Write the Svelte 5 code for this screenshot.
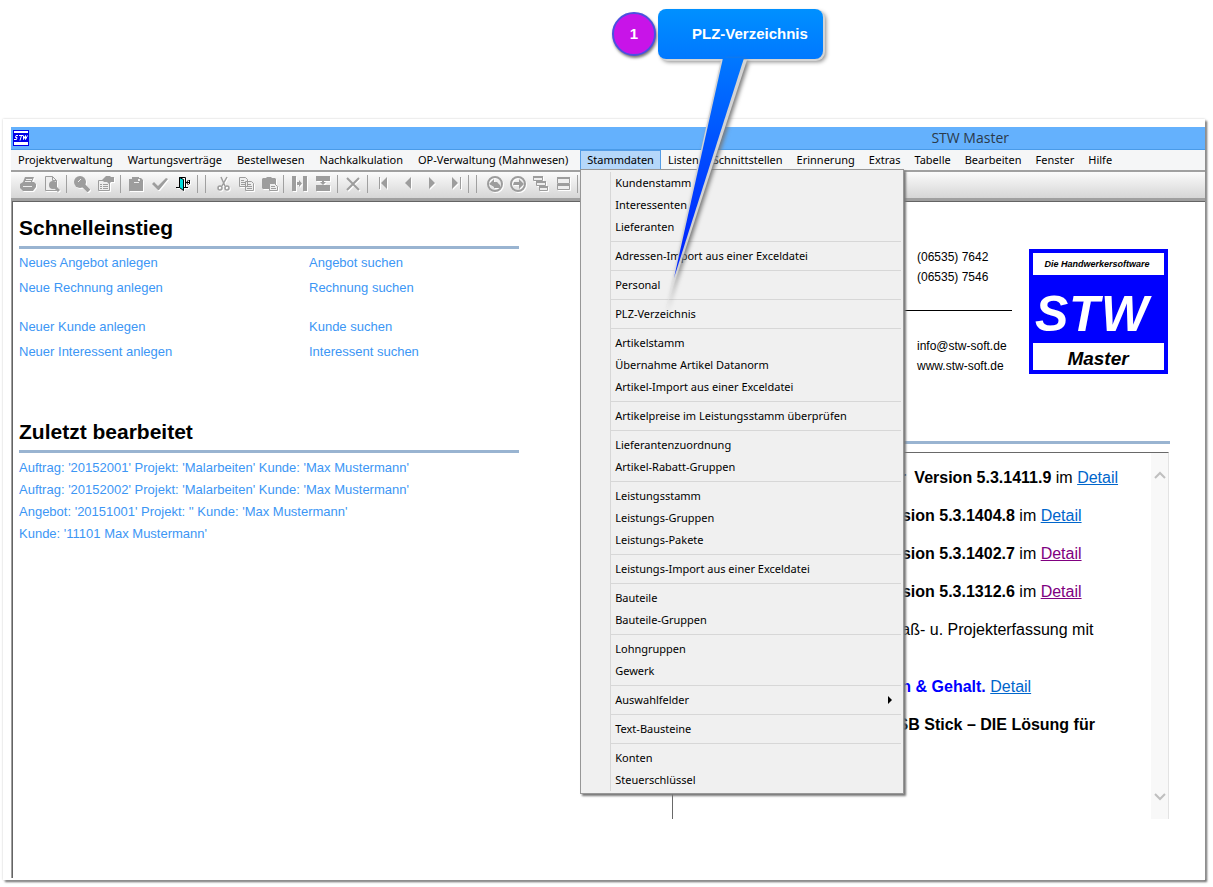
<script>
  const menusBefore = ['Projektverwaltung', 'Wartungsverträge', 'Bestellwesen', 'Nachkalkulation', 'OP-Verwaltung (Mahnwesen)'];
  const menusAfter = ['Listen', 'Schnittstellen', 'Erinnerung', 'Extras', 'Tabelle', 'Bearbeiten', 'Fenster', 'Hilfe'];

  const menuGroups = [
    ['Kundenstamm', 'Interessenten', 'Lieferanten'],
    ['Adressen-Import aus einer Exceldatei'],
    ['Personal'],
    ['PLZ-Verzeichnis'],
    ['Artikelstamm', 'Übernahme Artikel Datanorm', 'Artikel-Import aus einer Exceldatei'],
    ['Artikelpreise im Leistungsstamm überprüfen'],
    ['Lieferantenzuordnung', 'Artikel-Rabatt-Gruppen'],
    ['Leistungsstamm', 'Leistungs-Gruppen', 'Leistungs-Pakete'],
    ['Leistungs-Import aus einer Exceldatei'],
    ['Bauteile', 'Bauteile-Gruppen'],
    ['Lohngruppen', 'Gewerk'],
    ['Auswahlfelder'],
    ['Text-Bausteine'],
    ['Konten', 'Steuerschlüssel']
  ];
  const submenus = ['Auswahlfelder'];

  const toolGroups = [
    { tools: ['print', 'preview'] },
    { tools: ['find', 'properties'] },
    { tools: ['save', 'check', 'exit'], double: true },
    { tools: ['cut', 'copy', 'paste'], tight: true },
    { tools: ['insert', 'append'] },
    { tools: ['delete'] },
    { tools: ['first', 'prev', 'next', 'last'], double: true },
    { tools: ['back', 'forward', 'cascade', 'tile'], tight: true }
  ];

  const quickLinks = [
    [['Neues Angebot anlegen', 'Angebot suchen'], ['Neue Rechnung anlegen', 'Rechnung suchen']],
    [['Neuer Kunde anlegen', 'Kunde suchen'], ['Neuer Interessent anlegen', 'Interessent suchen']]
  ];

  const recent = [
    "Auftrag: '20152001' Projekt: 'Malarbeiten' Kunde: 'Max Mustermann'",
    "Auftrag: '20152002' Projekt: 'Malarbeiten' Kunde: 'Max Mustermann'",
    "Angebot: '20151001' Projekt: '' Kunde: 'Max Mustermann'",
    "Kunde: '11101 Max Mustermann'"
  ];

  const news = [
    { lead: 'der', indent: 208, bold: 'Version 5.3.1411.9', plain: 'im', link: true },
    { indent: 204, bold: 'Version 5.3.1404.8', plain: 'im', link: true },
    { indent: 204, bold: 'Version 5.3.1402.7', plain: 'im', link: true, visited: true },
    { indent: 204, bold: 'Version 5.3.1312.6', plain: 'im', link: true, visited: true },
    { indent: 191, plain: 'Aufmaß- u. Projekterfassung mit', wide: true },
    { indent: 199, bold: 'Lohn & Gehalt.', blue: true, link: true },
    { indent: 213, bold: 'USB Stick – DIE Lösung für' }
  ];
</script>

{#snippet icon(name)}
  <svg class="icon" viewBox="0 0 16 16" width="16" height="16" aria-hidden="true">
    {#if name === 'print'}
      <path d="M5 1h9l-2 5h2l2 2v3l-3 4H3l-3-3V8l3-2z" />
      <path d="M6 3.500h6M5 5.500h6M3 10.500h9" stroke="#eee" />
    {:else if name === 'preview'}
      <path d="M1.500.5h7l4 4v10h-11z" fill="#eee" stroke="#9d9d9d" />
      <path d="M8.500.5v4h4" fill="none" stroke="#9d9d9d" />
      <circle cx="9" cy="9" r="4" />
      <path d="M11 11l4 4" stroke="#9d9d9d" stroke-width="3" />
    {:else if name === 'find'}
      <circle cx="6" cy="6" r="6" />
      <path d="M4 6l3-3" stroke="#eee" />
      <path d="M9 9l6 6" stroke="#9d9d9d" stroke-width="4" />
    {:else if name === 'properties'}
      <path d="M.5 4.500h11v10H.5z" fill="#eee" stroke="#9d9d9d" />
      <path d="M2 8.500h2M5 8.500h5M2 10.500h2M5 10.500h5M2 12.500h2M5 12.500h5" stroke="#9d9d9d" />
      <path d="M4 4l4-4h4l1 1h3v5h-3l-2 2-2-2H6z" />
    {:else if name === 'save'}
      <path d="M1 3h3V1h7v1h2l2 2v11H1z" />
      <path d="M6 6.500h5M2 2.500h2" stroke="#eee" />
      <path d="M10 3h2v2h-2z" fill="#eee" />
    {:else if name === 'check'}
      <path d="M0 8l2-2 4 4 8-8 2 1-9 11H6z" />
    {:else if name === 'exit'}
      <path d="M0 11.500h3M3.500 12V1.500h6v10M7 11.500h5" fill="none" stroke="#000" />
      <path d="M3.500 1.500l4 2v11l-4-3z" fill="#0dd" stroke="#000" />
      <path d="M9 6.500h5M12.500 4l-2 2.500 2 2.500M13.500 4v4" fill="none" stroke="#000" />
    {:else if name === 'cut'}
      <path d="M5 1l4 9M11 1L6 10" fill="none" stroke="#9d9d9d" stroke-width="1.5" />
      <circle cx="4" cy="12" r="2" fill="none" stroke="#9d9d9d" stroke-width="1.5" />
      <circle cx="11" cy="12" r="2" fill="none" stroke="#9d9d9d" stroke-width="1.5" />
    {:else if name === 'copy'}
      <path d="M.5 1.500h6l2 2v7h-8zM6.500 5.500h6l2 2v7h-8z" fill="#eee" stroke="#9d9d9d" />
      <path d="M2 4.500h3M2 6.500h4M2 8.500h4M8 8.500h4M8 10.500h5M8 12.500h5" stroke="#9d9d9d" />
    {:else if name === 'paste'}
      <path d="M0 3l1-1h3l1-1h4l1 1h3l1 1v10H1l-1-1z" />
      <path d="M7.500 7.500h5l3 3v4h-8z" fill="#eee" stroke="#9d9d9d" />
      <path d="M9 10.500h4M9 12.500h5" stroke="#9d9d9d" />
    {:else if name === 'insert'}
      <path d="M1 0h4v15H1zM12 0h4v15h-4zM6 6h2V4l3 3.500L8 11V9H6z" />
    {:else if name === 'append'}
      <path d="M1 0h14v5H9v1h2L8 9 5 6h2V5H1zM1 9h14v6H1z" />
    {:else if name === 'delete'}
      <path d="M2 2l12 12M14 2L2 14" fill="none" stroke="#9d9d9d" stroke-width="2" />
    {:else if name === 'first'}
      <path d="M4 1h1v12H4zM12 1v12L6 7z" />
    {:else if name === 'prev'}
      <path d="M12 1v12L6 7z" />
    {:else if name === 'next'}
      <path d="M6 1v12l6-6z" />
    {:else if name === 'last'}
      <path d="M5 1v12l6-6zM13 1h1v12h-1z" />
    {:else if name === 'back'}
      <circle cx="8" cy="8" r="7" fill="none" stroke="#9d9d9d" stroke-width="2" />
      <path d="M2 8l5-5v3h3l3 3v3H7v-1z" />
    {:else if name === 'forward'}
      <circle cx="8" cy="8" r="7" fill="none" stroke="#9d9d9d" stroke-width="2" />
      <path d="M14 8L9 3v3H4L3 9h6v4z" />
    {:else if name === 'cascade'}
      <path d="M.5.5h9v4h-9zM3.500 5.500h9v4h-9zM6.500 10.500h8v4h-8z" fill="#eee" stroke="#9d9d9d" />
      <path d="M0 0h10v2H0zM3 5h10v2H3zM6 10h9v2H6z" />
    {:else if name === 'tile'}
      <path d="M1.500 1.500h12v6h-12zM1.500 8.500h12v5h-12z" fill="#eee" stroke="#9d9d9d" />
      <path d="M1 1h13v2H1zM1 8h13v2H1z" />
    {/if}
  </svg>
{/snippet}

<div class="page">
  <div class="window">
    <header class="titlebar">
      <svg class="app-icon" viewBox="0 0 16 16" width="16" height="16" aria-hidden="true">
        <path d="M0 0h16v16H0z" fill="#0000e8" />
        <path d="M1 1h14v2H1zM1 12h14v3H1z" fill="#fff" />
        <path d="M5 5.500H3L2.500 7.500H4l-.5 2H1M6 5.500h4M8.500 5.500L7 10.500M10.500 5.500v4l2-4v4l2-4" fill="none" stroke="#fff" />
      </svg>
      <span class="title">STW Master</span>
    </header>

    <nav class="menubar">
      <div class="modules">
        {#each menusBefore as name}
          <button class="menu">{name}</button>
        {/each}
      </div>
      <div class="menu-open">
        <button class="menu active" aria-expanded="true">Stammdaten</button>
        <div class="dropdown">
          {#each menuGroups as group}
            <div class="menu-group">
              {#each group as item}
                <button class="entry">
                  {item}
                  {#if submenus.includes(item)}
                    <svg class="arrow" viewBox="0 0 4 8" width="4" height="8" aria-hidden="true"><path d="M0 0l4 4-4 4z" /></svg>
                  {/if}
                </button>
              {/each}
            </div>
          {/each}
        </div>
      </div>
      {#each menusAfter as name}
        <button class="menu">{name}</button>
      {/each}
    </nav>

    <div class="toolbar">
      {#each toolGroups as group}
        <div class="tool-group" class:tight={group.tight}>
          {#each group.tools as tool}
            <button class="tool" aria-label={tool}>{@render icon(tool)}</button>
          {/each}
        </div>
        <span class="divider" class:double={group.double}></span>
      {/each}
    </div>

    <main class="content">
      <div class="start">
        <section class="quick">
          <h2>Schnelleinstieg</h2>
          {#each quickLinks as block}
            <div class="link-block">
              {#each block as [create, search]}
                <a href="#neu">{create}</a>
                <a href="#suchen">{search}</a>
              {/each}
            </div>
          {/each}
        </section>
        <section class="recent">
          <h2>Zuletzt bearbeitet</h2>
          <div class="recent-list">
            {#each recent as entry}
              <a href="#zuletzt">{entry}</a>
            {/each}
          </div>
        </section>
      </div>

      <aside class="info">
        <div class="company">
          <div class="contact">
            <p>(06535) 7642<br />(06535) 7546</p>
            <p class="web">info@stw-soft.de<br />www.stw-soft.de</p>
          </div>
          <svg class="logo" viewBox="0 0 139 125" width="139" height="125" role="img" aria-label="STW Master">
            <path d="M0 0h139v125H0z" fill="#00f" />
            <path d="M4 4h131v22H4zM4 94h131v27H4z" fill="#fff" />
            <text x="68" y="18" text-anchor="middle" font-size="9">Die Handwerkersoftware</text>
            <g class="brand" font-size="50">
              <text x="6" y="82">S</text>
              <text x="40" y="82">T</text>
              <text x="72" y="82">W</text>
            </g>
            <text x="69" y="116" text-anchor="middle" font-size="19">Master</text>
          </svg>
        </div>

        <div class="news">
          <div class="news-text">
            {#each news as item}
              <p class:wide={item.wide} style="padding-left: {item.indent}px">
                {#if item.lead}<b class="lead">{item.lead}</b>{/if}
                {#if item.bold}<b class:blue={item.blue}>{item.bold}</b>{/if}
                {item.plain ?? ''}
                {#if item.link}<a href="#detail" class:visited={item.visited}>Detail</a>{/if}
              </p>
            {/each}
          </div>
          <div class="scrollbar">
            <svg viewBox="0 0 12 8" width="12" height="8" aria-hidden="true"><path d="M1 7l5-5 5 5" /></svg>
            <svg viewBox="0 0 12 8" width="12" height="8" aria-hidden="true"><path d="M1 1l5 5 5-5" /></svg>
          </div>
        </div>
      </aside>
    </main>
  </div>

  <div class="callout">
    <svg class="tail" viewBox="0 0 90 260" width="90" height="260" aria-hidden="true">
      <defs>
        <linearGradient id="tail-fill" x1="0" y1="0" x2="0" y2="1">
          <stop offset="0" stop-color="#0078ff" />
          <stop offset="0.5" stop-color="#0046ff" />
          <stop offset="0.85" stop-color="#0028ff" />
        </linearGradient>
        <linearGradient id="tail-edge" x1="0" y1="0" x2="0" y2="1">
          <stop offset="0.7" stop-color="#d4d4d4" />
          <stop offset="1" stop-color="#e8e8e8" stop-opacity="0.3" />
        </linearGradient>
      </defs>
      <path class="edge" d="M61 2L5 254 87 2z" fill="url(#tail-edge)" />
      <path d="M63 0L14 220 84 0z" fill="url(#tail-fill)" />
    </svg>
    <span class="number">1</span>
    <span class="bubble">PLZ-Verzeichnis</span>
  </div>
</div>

<style>
  :global(body) {
    background: #fff;
  }

  .page {
    position: relative;
    padding: 119px 8px 6px 3px;
    font-family: "Liberation Sans", Arial, sans-serif;
    font-size: 13px;
    color: #000;
  }

  button {
    margin: 0;
    padding: 0;
    border: 0;
    background: none;
    font: inherit;
    color: inherit;
    text-align: left;
    white-space: nowrap;
  }

  a {
    text-decoration: none;
    color: #3c96f5;
  }

  .window {
    padding: 8px 0 2px 8px;
    background: #fff;
    box-shadow: 0 0 2px #ccc, 2px 2px 2px #666;
  }

  .titlebar {
    display: flex;
    align-items: center;
    justify-content: space-between;
    height: 22px;
    padding: 0 196px 0 2px;
    background: #64b1fd;
    border-bottom: 1px solid #4a9be8;
  }

  .title {
    font-family: "Open Sans", "Segoe UI", sans-serif;
    font-size: 14px;
    line-height: 20px;
    color: #2b3a4a;
  }

  .menubar {
    display: flex;
    height: 20px;
    background: #f5f6f7;
    font-family: "Noto Sans", "Segoe UI", sans-serif;
    font-size: 11px;
    line-height: 18px;
  }

  .modules {
    display: flex;
    gap: 1px;
    padding-right: 5px;
  }

  .menu {
    height: 20px;
    padding: 0 7px;
  }

  .menu.active {
    padding: 0 6px;
    border: 1px solid #569de5;
    background: #b5d7fa;
  }

  .menu-open {
    position: relative;
  }

  .dropdown {
    position: absolute;
    z-index: 2;
    top: 19px;
    left: 0;
    width: 324px;
    box-sizing: border-box;
    padding: 2px 2px 2px 29px;
    border: 1px solid #979797;
    background: #f0f0f0;
    box-shadow: 2px 2px 2px #777;
  }

  .menu-group {
    border-left: 1px solid #d7d7d7;
  }

  .menu-group + .menu-group::before {
    content: "";
    display: block;
    height: 1px;
    padding: 3px 0;
    background: #d7d7d7 content-box;
  }

  .entry {
    display: flex;
    align-items: center;
    justify-content: space-between;
    width: 100%;
    height: 22px;
    padding: 0 9px 0 4px;
  }

  .toolbar {
    display: flex;
    align-items: center;
    height: 24px;
    padding: 0 0 2px 5px;
    border-top: 2px solid #a0a0a0;
    border-bottom: 3px solid #a0a0a0;
    background: linear-gradient(#fbfbfb, #d6d6d6);
  }

  .tool-group {
    display: flex;
  }

  .tool {
    display: flex;
    justify-content: center;
    width: 24px;
  }

  .tight .tool {
    width: 23px;
  }

  .icon {
    fill: #9d9d9d;
    filter: drop-shadow(1px 1px 0 #fff);
  }

  .divider {
    width: 1px;
    height: 18px;
    margin: 0 3px 0 2px;
    background: #a0a0a0;
  }

  .divider.double {
    width: 7px;
    margin: 0 6px 0 1px;
    border: solid #a0a0a0;
    border-width: 0 1px;
    background: none;
  }

  .content {
    display: grid;
    grid-template-columns: 500px 498px;
    justify-content: space-between;
    padding: 12px 35px 59px 6px;
    border-top: 1px solid #646464;
    border-left: 1px solid #646464;
    box-shadow: -1px 0 #a0a0a0;
    margin-left: 1px;
  }

  h2 {
    margin: 0;
    padding-bottom: 4px;
    border-bottom: 3px solid #99b4d1;
    font-size: 21px;
    line-height: 28px;
  }

  .link-block {
    display: grid;
    grid-template-columns: 290px 1fr;
    padding: 1px 0 13px;
    line-height: 25px;
  }

  .recent {
    margin-top: 41px;
  }

  .recent-list {
    display: flex;
    flex-direction: column;
    padding-top: 4px;
    line-height: 22px;
  }

  .company {
    display: flex;
    align-items: center;
    justify-content: space-between;
    padding: 33px 2px 65px 200px;
    border-bottom: 3px solid #99b4d1;
  }

  .contact {
    width: 140px;
    font-size: 12px;
    line-height: 20px;
  }

  .contact p {
    margin: 0;
    padding-left: 45px;
  }

  .contact .web {
    margin-top: 23px;
    padding-top: 25px;
    border-top: 1px solid #000;
  }

  .logo text {
    font-weight: bold;
    font-style: italic;
  }

  .logo .brand {
    fill: #fff;
  }

  .news {
    display: flex;
    height: 366px;
    margin: 8px 1px 0 0;
    border: solid #696969;
    border-width: 1px 0 0 1px;
    border-right: 1px solid #e3e3e3;
  }

  .news-text {
    flex: 1;
    padding-top: 15px;
    font-size: 16px;
    line-height: 19px;
  }

  .news-text p {
    margin: 0 0 19px;
    white-space: nowrap;
  }

  .news-text p.wide {
    margin-bottom: 38px;
  }

  .news-text a {
    color: #0066cc;
    text-decoration: underline;
  }

  .news-text a.visited {
    color: #800080;
  }

  .lead {
    margin-right: 4px;
  }

  .blue {
    color: #00f;
  }

  .scrollbar {
    display: flex;
    flex-direction: column;
    align-items: center;
    justify-content: space-between;
    width: 17px;
    padding: 18px 0;
    box-sizing: border-box;
    background: #f8f8f8;
  }

  .scrollbar path {
    fill: none;
    stroke: #bfbfbf;
    stroke-width: 2;
  }

  .callout {
    position: absolute;
    z-index: 3;
    top: 9px;
    left: 612px;
    display: flex;
    align-items: center;
    gap: 2px;
    color: #fff;
    font-weight: bold;
    font-size: 15px;
  }

  .number {
    width: 40px;
    border: 2px solid #4a50e0;
    border-radius: 50%;
    background: #c814e8;
    box-shadow: 1px 2px 3px #777;
    line-height: 40px;
    text-align: center;
  }

  .bubble {
    position: relative;
    width: 131px;
    padding-left: 34px;
    border-radius: 8px;
    background: linear-gradient(#0090ff, #0078ff);
    box-shadow: 1px 1px 0 1px #d4d4d4, 3px 3px 4px #888;
    line-height: 50px;
  }

  .tail {
    position: absolute;
    z-index: 1;
    top: 49px;
    left: 48px;
    filter: drop-shadow(2px 2px 2px #777);
  }
</style>
